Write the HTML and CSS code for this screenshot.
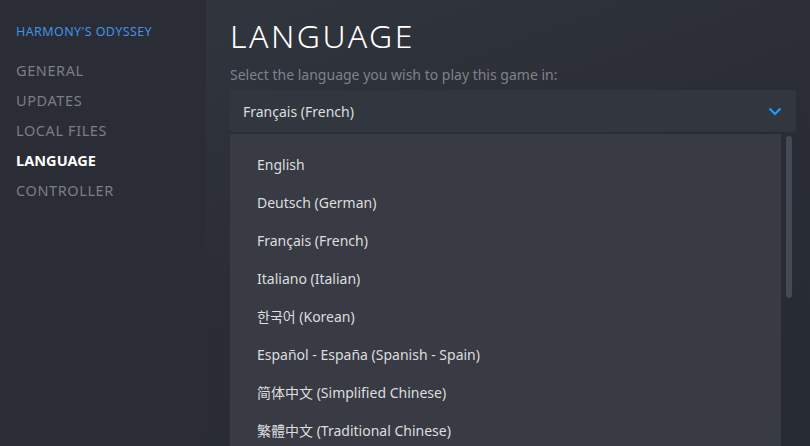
FILE: index.html
```html
<!DOCTYPE html>
<html>
<head>
<meta charset="utf-8">
<link rel="stylesheet" href="styles.css">
</head>
<body>
<div class="app">
  <nav class="sidebar">
    <div class="game-title">HARMONY'S ODYSSEY</div>
    <ul class="nav">
      <li>GENERAL</li>
      <li>UPDATES</li>
      <li>LOCAL FILES</li>
      <li class="active">LANGUAGE</li>
      <li>CONTROLLER</li>
    </ul>
  </nav>
  <main class="content">
    <h1 class="title">LANGUAGE</h1>
    <p class="subtitle">Select the language you wish to play this game in:</p>
    <div class="select">
      <span class="select-value">Français (French)</span>
      <svg class="chevron" width="14" height="9" viewBox="0 0 14 9"><path d="M1.5 1.5 L7 7 L12.5 1.5" fill="none" stroke="#1a9fff" stroke-width="2.2"/></svg>
    </div>
    <div class="menu-row">
      <ul class="menu">
        <li>English</li>
        <li>Deutsch (German)</li>
        <li>Français (French)</li>
        <li>Italiano (Italian)</li>
        <li>한국어 (Korean)</li>
        <li>Español - España (Spanish - Spain)</li>
        <li>简体中文 (Simplified Chinese)</li>
        <li>繁體中文 (Traditional Chinese)</li>
      </ul>
      <div class="scroll-track"><div class="scroll-thumb"></div></div>
    </div>
  </main>
</div>
</body>
</html>
```
FILE: styles.css
```css
* { box-sizing: border-box; }
html, body { margin: 0; padding: 0; height: 100%; overflow: hidden; }
body {
  font-family: "Noto Sans", "Noto Sans CJK KR", "Noto Sans CJK SC", sans-serif;
  background: #272a31;
}
.app { display: flex; height: 446px; }
.sidebar {
  width: 206px;
  flex: none;
  background: #2a2d35;
  padding: 24px 0 0 16px;
}
.game-title {
  color: #4391e8;
  font-size: 12.5px;
  line-height: 16px;
  letter-spacing: 0.4px;
}
.nav { list-style: none; margin: 15px 0 0; padding: 0; }
.nav li {
  color: #7b7e84;
  font-size: 14.5px;
  line-height: 30px;
  height: 30px;
  letter-spacing: 0.6px;
}
.nav li.active { color: #ffffff; font-weight: 700; letter-spacing: 0.05px; }
.content {
  flex: 1;
  min-width: 0;
  background: linear-gradient(160deg, #31353d 0%, #2a2d35 45%, #262a31 100%);
  padding: 17px 14px 0 24px;
  display: flex;
  flex-direction: column;
}
.content > * { flex-shrink: 0; }
.title {
  margin: 0;
  color: #ffffff;
  font-weight: 300;
  font-size: 32px;
  line-height: 38px;
  letter-spacing: 2.5px;
  font-family: "Noto Sans", sans-serif;
}
.subtitle {
  margin: 10px 0 0;
  color: #7f828a;
  font-size: 14px;
  line-height: 20px;
}
.select {
  margin-top: 5px;
  height: 42px;
  background: #32363e;
  border-radius: 3px;
  display: flex;
  align-items: center;
  justify-content: space-between;
  padding: 0 14px 0 13px;
}
.select-value { color: #dcdedf; font-size: 14px; }
.chevron { display: block; }
.menu-row { display: flex; margin-top: 2px; gap: 5px; flex: 1 1 0; min-height: 0; overflow: hidden; }
.menu {
  list-style: none;
  margin: 0;
  padding: 12px 0 0 27px;
  width: 551px;
  background: #383b44;
  border-top-left-radius: 2px;
}
.menu li {
  color: #dcdedf;
  font-size: 14px;
  height: 38px;
  line-height: 38px;
}
.scroll-track { width: 6px; padding-top: 2px; }
.scroll-thumb {
  width: 6px;
  height: 162px;
  background: #464a54;
  border-radius: 3px;
}
```
